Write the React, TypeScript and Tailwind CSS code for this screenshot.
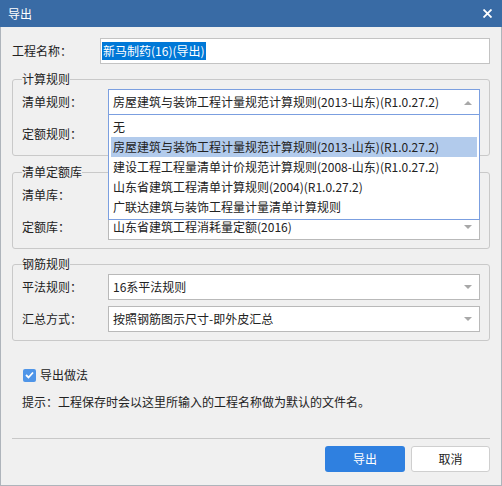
import React from 'react'

const font = { fontFamily: '"Noto Sans CJK SC", "Noto Sans", sans-serif' }

const options = [
    '无',
    '房屋建筑与装饰工程计量规范计算规则(2013-山东)(R1.0.27.2)',
    '建设工程工程量清单计价规范计算规则(2008-山东)(R1.0.27.2)',
    '山东省建筑工程清单计算规则(2004)(R1.0.27.2)',
    '广联达建筑与装饰工程量计量清单计算规则',
]

function Arrow({ up }: { up?: boolean }) {
    return (
        <svg width="8" height="5" viewBox="0 0 8 5" className="shrink-0">
            {up ? <polygon points="0,5 8,5 4,1" fill="#a8a8a8" /> : <polygon points="0,0 8,0 4,4" fill="#a8a8a8" />}
        </svg>
    )
}

function Select({ value, focused, open }: { value: string; focused?: boolean; open?: boolean }) {
    return (
        <div className="relative w-[372px]">
            <div
                className={`h-[26px] flex items-center justify-between pl-[4px] pr-[7px] bg-white border text-[12px] leading-[18px] text-[#222] ${focused ? 'border-[#7b9fe0]' : 'border-[#b9b9b9]'}`}
            >
                <span className="whitespace-nowrap">{value}</span>
                <Arrow up={open} />
            </div>
            {open && (
                <div className="absolute left-0 top-[25px] z-10 w-full bg-white border border-[#7b9fe0] p-[2px]">
                    {options.map((o, i) => (
                        <div
                            key={o}
                            className={`h-[20px] flex items-center px-[2px] text-[12px] leading-[18px] text-[#222] whitespace-nowrap ${i === 1 ? 'bg-[#b2cbec]' : ''}`}
                        >
                            {o}
                        </div>
                    ))}
                </div>
            )}
        </div>
    )
}

function Row({ label, children }: { label: string; children: React.ReactNode }) {
    return (
        <div className="flex items-center">
            <div className="w-[86px] text-[12px] leading-[18px] text-[#222]">{label}</div>
            {children}
        </div>
    )
}

function Group({ title, children, className }: { title: string; children: React.ReactNode; className?: string }) {
    return (
        <fieldset className={`border border-[#c9c9c9] rounded-[3px] px-[9px] pt-[1px] pb-[8px] ${className ?? ''}`}>
            <legend className="text-[12px] leading-[18px] text-[#222] px-0">{title}</legend>
            <div className="flex flex-col gap-[6px]">{children}</div>
        </fieldset>
    )
}

export default function App() {
    return (
        <div className="w-[502px] h-[486px] flex flex-col bg-[#f0f0f0]" style={font}>
            <div className="h-[27px] shrink-0 bg-[#396ba5] flex items-center justify-between pl-[8px] pr-[10px]">
                <span className="text-white text-[12px] leading-[18px]">导出</span>
                <svg width="9" height="9" viewBox="0 0 9 9">
                    <path d="M0.5 0.5 L8.5 8.5 M8.5 0.5 L0.5 8.5" stroke="white" strokeWidth="1.8" />
                </svg>
            </div>

            <div className="flex-1 flex flex-col border-x border-b border-[#aeb4bb] px-[11px] pt-[11px] pb-[11px]">
                <div className="flex items-center">
                    <div className="w-[88px] text-[12px] leading-[18px] text-[#222]">工程名称：</div>
                    <div className="flex-1 h-[26px] bg-white border border-[#c3c3c3] flex items-center pl-[1px]">
                        <span className="bg-[#0078d7] text-white text-[12px] leading-[18px] px-[1px]">新马制药(16)(导出)</span>
                    </div>
                </div>

                <Group title="计算规则" className="mt-[6px]">
                    <div className="relative z-10">
                        <Row label="清单规则：">
                            <Select value="房屋建筑与装饰工程计量规范计算规则(2013-山东)(R1.0.27.2)" focused open />
                        </Row>
                    </div>
                    <Row label="定额规则：">
                        <Select value="" />
                    </Row>
                </Group>

                <Group title="清单定额库" className="mt-[7px]">
                    <Row label="清单库：">
                        <Select value="" />
                    </Row>
                    <Row label="定额库：">
                        <Select value="山东省建筑工程消耗量定额(2016)" />
                    </Row>
                </Group>

                <Group title="钢筋规则" className="mt-[6px]">
                    <Row label="平法规则：">
                        <Select value="16系平法规则" />
                    </Row>
                    <Row label="汇总方式：">
                        <Select value="按照钢筋图示尺寸-即外皮汇总" />
                    </Row>
                </Group>

                <div className="mt-[25px] h-[18px] flex items-center pl-[11px]">
                    <div className="w-[13px] h-[13px] rounded-[2px] bg-[#4f95e8] flex items-center justify-center">
                        <svg width="9" height="8" viewBox="0 0 9 8">
                            <path d="M1 4 L3.5 6.5 L8 1.5" stroke="white" strokeWidth="1.8" fill="none" />
                        </svg>
                    </div>
                    <span className="ml-[4px] text-[12px] leading-[18px] text-[#222]">导出做法</span>
                </div>

                <div className="mt-[9px] h-[18px] pl-[10px] text-[12px] leading-[18px] text-[#222]">
                    提示：工程保存时会以这里所输入的工程名称做为默认的文件名。
                </div>

                <div className="mt-[27px] h-px bg-[#c8c8c8]" />

                <div className="mt-[7px] flex justify-end gap-[6px]">
                    <button className="w-[80px] h-[26px] rounded-[3px] bg-[#2f80e0] text-white text-[12px] leading-[18px]">导出</button>
                    <button className="w-[79px] h-[26px] rounded-[3px] bg-white border border-[#cfcfcf] text-[#222] text-[12px] leading-[18px]">取消</button>
                </div>
            </div>
        </div>
    )
}
